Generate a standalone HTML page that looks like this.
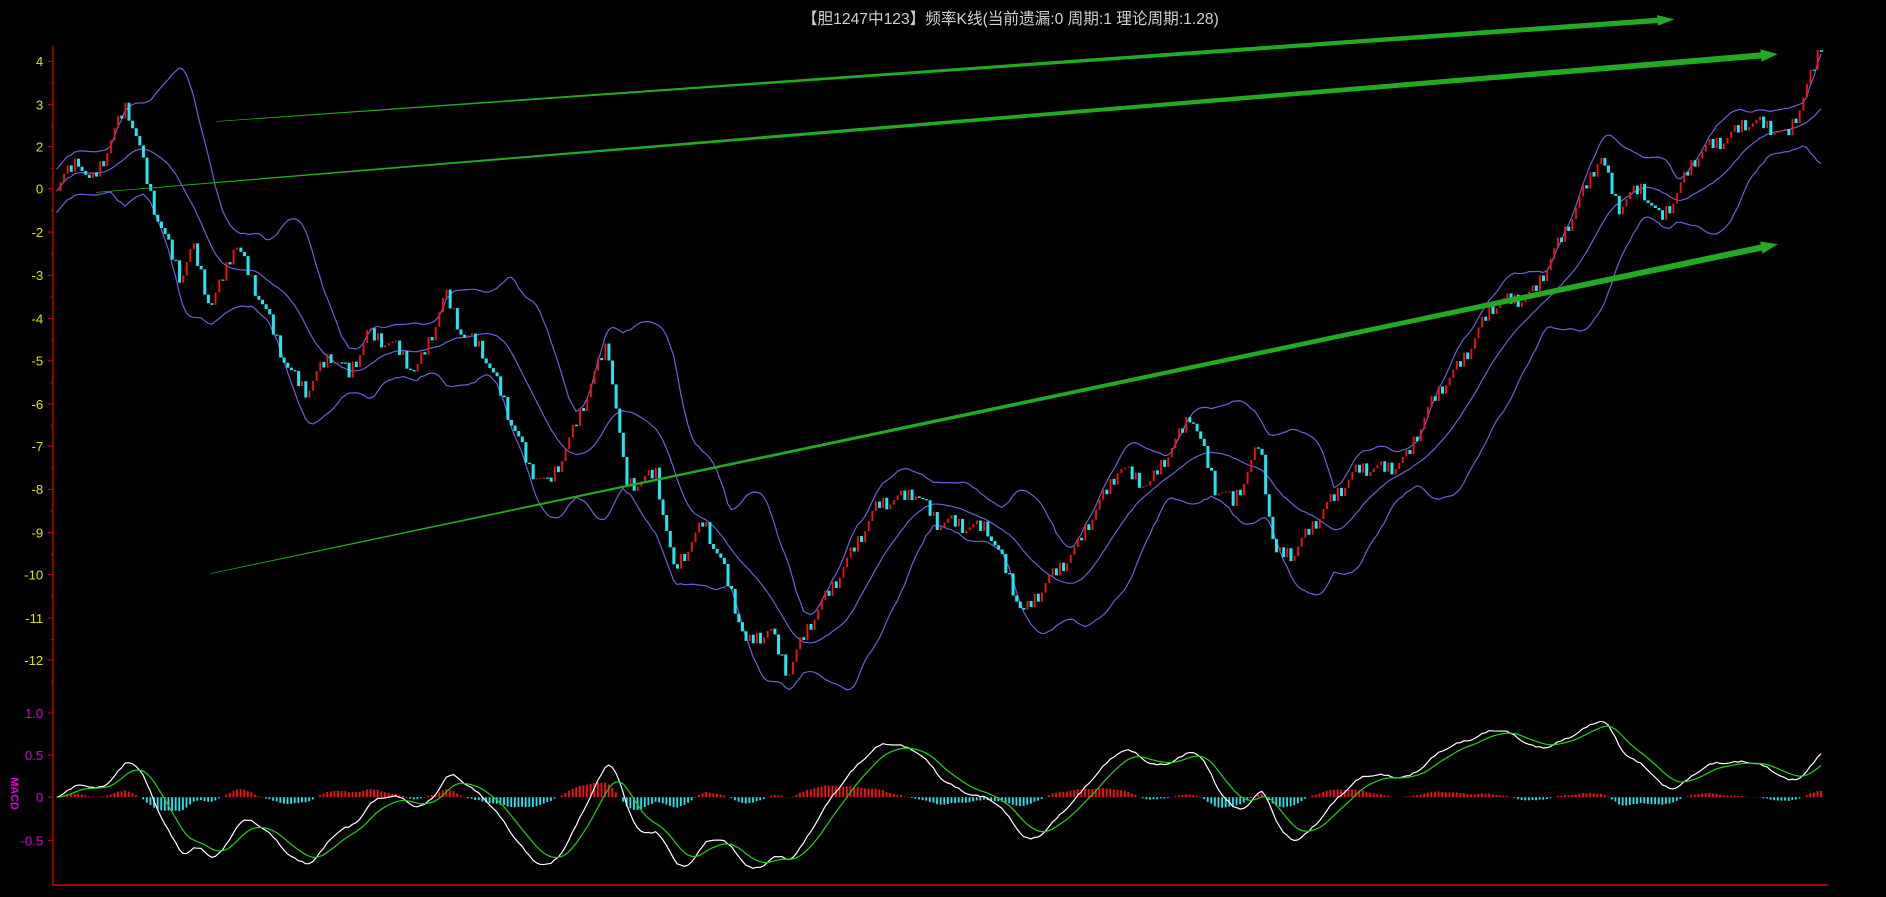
<!DOCTYPE html>
<html><head><meta charset="utf-8"><style>
html,body{margin:0;padding:0;background:#000;overflow:hidden}
svg{display:block}
text{font-family:"Liberation Sans","Noto Sans CJK SC",sans-serif}
</style></head><body>
<svg id="s" width="1886" height="897" viewBox="0 0 1568 746" preserveAspectRatio="none" xmlns="http://www.w3.org/2000/svg">
<rect width="1568" height="746" fill="#000"/>
<text x="840" y="20" fill="#d0d0d0" font-size="13" text-anchor="middle" font-family="Liberation Mono, Noto Sans CJK SC, monospace">【胆1247中123】频率K线(当前遗漏:0 周期:1 理论周期:1.28)</text>
<line x1="44" y1="38" x2="44" y2="737" stroke="#c00000" stroke-width="1.2"/>
<line x1="44" y1="736" x2="1520" y2="736" stroke="#c00000" stroke-width="1.5"/>
<g id="axis" font-size="11"></g>
<text x="9" y="660" fill="#e000e0" font-size="9" font-weight="bold" transform="rotate(90 9 660)" text-anchor="middle">MACD</text>
<g id="bands" fill="none" stroke="#6a60d8" stroke-width="1"></g>
<g id="candles"></g>
<g id="macd"></g>
<g id="arrows" fill="#22aa22"></g>
</svg>
<script>
var NS="http://www.w3.org/2000/svg";
function el(p,t,a){var e=document.createElementNS(NS,t);for(var k in a)e.setAttribute(k,a[k]);p.appendChild(e);return e;}
var ax=document.getElementById('axis');
var labs=[["4",51],["3",87],["2",122],["0",157],["-2",193],["-3",229],["-4",265],["-5",300],["-6",336],["-7",371],["-8",407],["-9",443],["-10",478],["-11",514],["-12",549]];
labs.forEach(function(l){var t=el(ax,'text',{x:36,y:l[1]+4,fill:'#e0e000','text-anchor':'end'});t.textContent=l[0];el(ax,'line',{x1:40,y1:l[1],x2:44,y2:l[1],stroke:'#c00000'});el(ax,'line',{x1:42,y1:l[1]+18,x2:44,y2:l[1]+18,stroke:'#c00000'});});
[["1.0",593],["0.5",628],["0",663],["-0.5",699]].forEach(function(l){var t=el(ax,'text',{x:36,y:l[1]+4,fill:'#d000d0','text-anchor':'end'});t.textContent=l[0];el(ax,'line',{x1:40,y1:l[1],x2:44,y2:l[1],stroke:'#c00000'});});
var wp=[[47,160],[65,130],[75,150],[85,135],[105,92],[115,120],[125,160],[150,235],[160,210],[175,255],[195,200],[210,240],[240,305],[255,325],[275,300],[290,310],[305,275],[330,295],[345,310],[370,245],[385,285],[400,290],[415,320],[440,395],[455,405],[505,290],[520,400],[545,395],[560,480],[585,430],[600,470],[620,540],[640,520],[655,560],[700,470],[730,425],[760,405],[780,440],[820,435],[850,515],[870,480],[895,460],[930,385],[955,410],[990,340],[1010,410],[1025,420],[1047,365],[1060,465],[1075,465],[1100,420],[1130,395],[1170,380],[1200,320],[1240,260],[1275,240],[1300,200],[1330,125],[1345,175],[1365,160],[1380,180],[1410,135],[1450,100],[1470,110],[1485,115],[1515,35]];
var xs=[],ys=[];
for(var x=47;x<=1515;x+=3){var j=0;while(j<wp.length-2&&wp[j+1][0]<x)j++;var a=wp[j],b=wp[j+1];var t=(x-a[0])/(b[0]-a[0]);var y=a[1]+(b[1]-a[1])*t;
var ph=(x%21)/21;y+=(ph<0.7?(0.35-ph)*22:(ph-0.85)*-50)+Math.sin(x*0.11)*4;xs.push(x);ys.push(y);}
var cg=document.getElementById('candles');
for(var i=1;i<xs.length;i++){var o=ys[i-1],c=ys[i];if(c<o){el(cg,'rect',{x:xs[i]-0.5,y:c,width:1.5,height:Math.max(1,o-c),fill:'#ff1010'});}else{el(cg,'rect',{x:xs[i]-1,y:o,width:2.5,height:Math.max(1,c-o),fill:'#20e8f0'});}}
var N=20,mid=[],up=[],lo=[];
for(var i=0;i<ys.length;i++){var s=0,n=0;for(var k=Math.max(0,i-N+1);k<=i;k++){s+=ys[k];n++;}var m=s/n;var v=0;for(var k=Math.max(0,i-N+1);k<=i;k++)v+=(ys[k]-m)*(ys[k]-m);var sd=Math.sqrt(v/n);var w=Math.max(18,2*sd);mid.push(m);up.push(m-w);lo.push(m+w);}
var bg=document.getElementById('bands');
[mid,up,lo].forEach(function(arr){var d='';for(var i=0;i<arr.length;i++)d+=(i?'L':'M')+xs[i]+' '+arr[i].toFixed(1);el(bg,'path',{d:d});});
var val=ys.map(function(y){return -(y-157)/35.6;});
var e12=val[0],e26=val[0],dea=0,dif=[],de=[];
for(var i=0;i<val.length;i++){e12=e12+(val[i]-e12)*2/13;e26=e26+(val[i]-e26)*2/27;var d=e12-e26;dea=dea+(d-dea)*2/10;dif.push(d);de.push(dea);}
var mg=document.getElementById('macd');var sc=70*0.35*2.8;
for(var i=0;i<dif.length;i++){var h=(dif[i]-de[i])*sc*0.55;h=Math.max(-24,Math.min(24,h));var y0=663;el(mg,'rect',{x:xs[i]-0.7,y:h>0?y0-h:y0,width:1.5,height:Math.abs(h),fill:h>0?'#ff1010':'#20e8f0'});}
function line(arr,col){var d='';for(var i=0;i<arr.length;i++)d+=(i?'L':'M')+xs[i]+' '+(663-arr[i]*sc).toFixed(1);el(mg,'path',{d:d,fill:'none',stroke:col,'stroke-width':1});}
line(dif,'#ffffff');line(de,'#20d020');
var ag=document.getElementById('arrows');
function arrow(x1,y1,x2,y2,w){var dx=x2-x1,dy=y2-y1,L=Math.sqrt(dx*dx+dy*dy);var ux=dx/L,uy=dy/L,px=-uy,py=ux;var hb=14;var bx=x2-ux*hb,by=y2-uy*hb;
var p=[[x1+px*0.3,y1+py*0.3],[bx+px*w,by+py*w],[bx+px*w*2,by+py*w*2],[x2,y2],[bx-px*w*2,by-py*w*2],[bx-px*w,by-py*w],[x1-px*0.3,y1-py*0.3]];
el(ag,'polygon',{points:p.map(function(q){return q[0].toFixed(1)+','+q[1].toFixed(1)}).join(' ')});}
arrow(180,101,1392,16,2.2);arrow(80,160,1478,45,2.6);arrow(175,477,1478,203,2.6);
</script>
</body></html>
